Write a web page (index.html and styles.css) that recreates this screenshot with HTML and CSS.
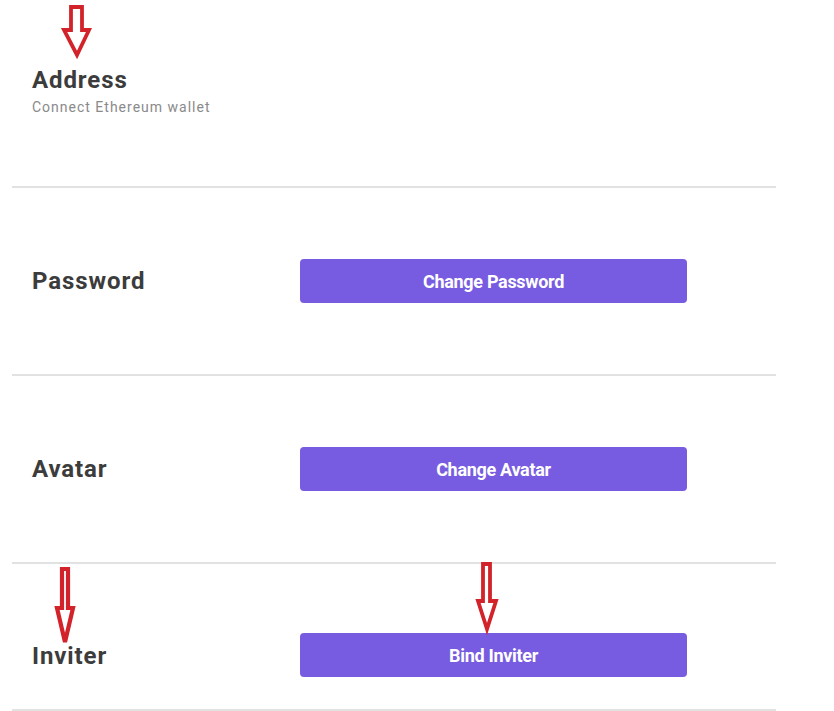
FILE: index.html
```html
<!DOCTYPE html>
<html lang="en">
<head>
<meta charset="utf-8">
<title>Settings</title>
<link rel="stylesheet" href="styles.css">
</head>
<body>
<div class="settings">
  <div class="row first">
    <div class="label">
      <div class="title">Address</div>
      <div class="sub">Connect Ethereum wallet</div>
    </div>
  </div>
  <div class="row">
    <div class="label"><div class="title">Password</div></div>
    <button class="btn">Change Password</button>
  </div>
  <div class="row">
    <div class="label"><div class="title">Avatar</div></div>
    <button class="btn">Change Avatar</button>
  </div>
  <div class="row last">
    <div class="label"><div class="title">Inviter</div></div>
    <button class="btn">Bind Inviter</button>
  </div>
</div>
<svg class="marks" width="834" height="711" viewBox="0 0 834 711" aria-hidden="true">
  <polygon points="71,7 82,7 82,30 89,30 77,55 64,30 71,30" />
  <polygon class="thick" points="62,569 68,569 68,608 73,608 65,642 57,608 62,608" />
  <polygon points="483,564 490,564 490,601 496,601 487,629 478,601 483,601" />
</svg>
</body>
</html>
```
FILE: styles.css
```css
html, body {
  margin: 0;
  padding: 0;
  background: #ffffff;
}
body {
  font-family: Roboto, "Liberation Sans", Arial, sans-serif;
  color: #3b3b3b;
  position: relative;
  width: 834px;
  height: 711px;
  overflow: hidden;
}
.settings {
  width: 764px;
  margin-left: 12px;
}
.row {
  display: flex;
  align-items: center;
  height: 186px;
  border-bottom: 2px solid #e2e2e2;
}
.row.first .label {
  margin-top: -4px;
}
.row.last {
  align-items: flex-start;
  height: 76px;
  padding-top: 69px;
}
.row.last .label {
  padding-top: 9px;
}
.label {
  padding-left: 20px;
  box-sizing: border-box;
  flex: none;
  width: 288px;
}
.title {
  font-size: 24px;
  font-weight: 700;
  line-height: 28px;
  letter-spacing: 0.9px;
  color: #3c3c3c;
}
.sub {
  margin-top: 4px;
  font-size: 14px;
  letter-spacing: 1px;
  color: #8a8a8a;
  line-height: 18px;
}
.btn {
  width: 387px;
  height: 44px;
  border: none;
  border-radius: 4px;
  background: #775be0;
  color: #ffffff;
  font-family: Roboto, "Liberation Sans", Arial, sans-serif;
  font-size: 18px;
  font-weight: 700;
  letter-spacing: -0.3px;
  padding: 0;
}
.marks {
  position: absolute;
  left: 0;
  top: 0;
  pointer-events: none;
}
.marks polygon {
  fill: none;
  stroke: #d2232a;
  stroke-width: 3.8;
  stroke-linejoin: miter;
}
.marks polygon.thick {
  stroke-width: 4.2;
}
```
